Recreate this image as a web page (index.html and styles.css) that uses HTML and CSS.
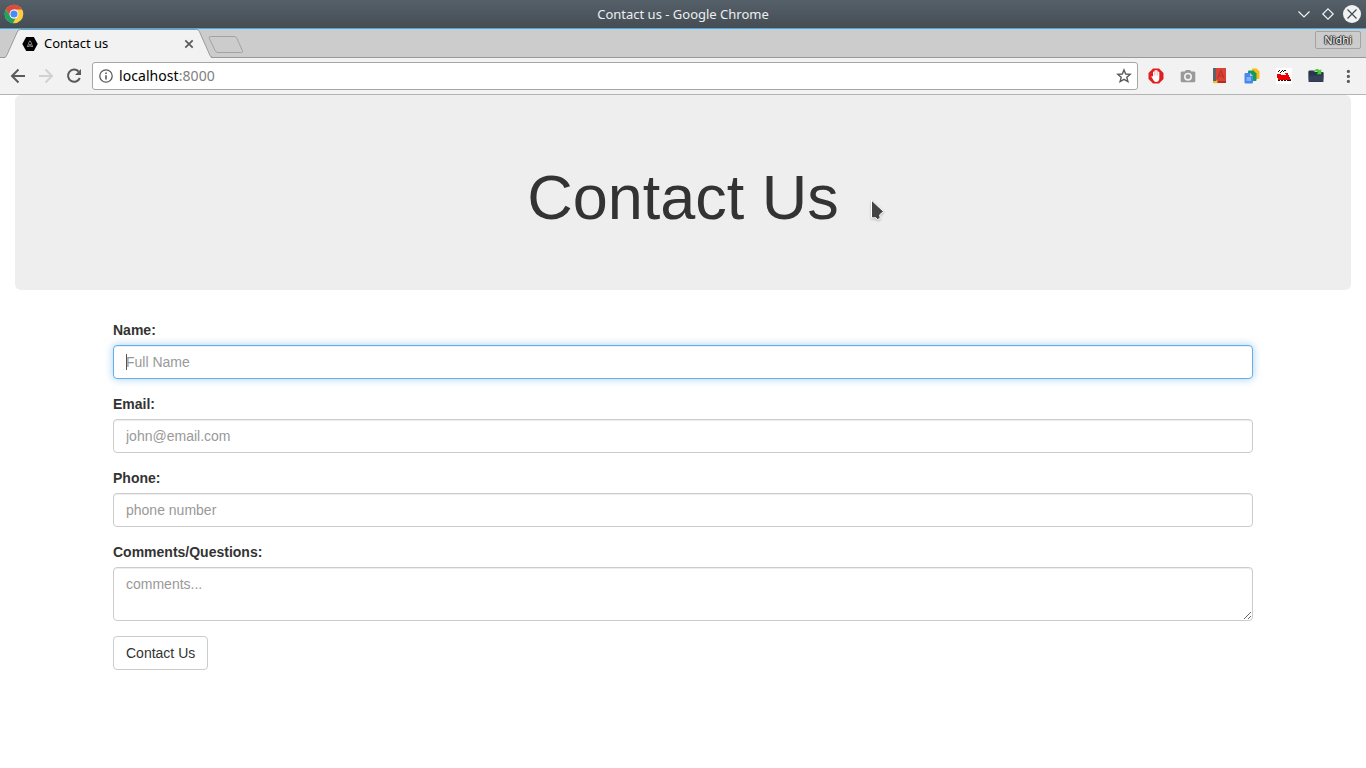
FILE: index.html
```html
<!DOCTYPE html>
<html lang="en">
<head>
<meta charset="utf-8">
<title>Contact us</title>
<link rel="stylesheet" href="styles.css">
</head>
<body>
<header class="titlebar">
  <svg class="chrome-logo" width="20" height="20" viewBox="0 0 20 20">
    <circle cx="10" cy="10" r="9.3" fill="#fbcd45"/>
    <path d="M10 10L5.9 12.3L1.9 5.4A9.3 9.3 0 0 1 18.1 5.4L10 5.5Z" fill="#dd4b3e"/>
    <path d="M1.9 5.4L6.1 12.3A4.5 4.5 0 0 0 11.5 14.2L9 19.25A9.3 9.3 0 0 1 1.9 5.4Z" fill="#1da462"/>
    <circle cx="10" cy="10" r="4.5" fill="#fff"/><circle cx="10" cy="10" r="3.6" fill="#4a8af4"/>
  </svg>
  <span class="window-title">Contact us - Google Chrome</span>
  <svg class="window-controls" width="70" height="28" viewBox="0 0 70 28" fill="none" stroke="#f1f2f2" stroke-width="1.2">
    <path d="M2.500 11.500L8 17L13.500 11.500"/>
    <path d="M32 8.800L37.200 14L32 19.200L26.800 14Z"/>
    <circle cx="56" cy="14" r="9" fill="#f1f2f2" stroke="none"/>
    <path d="M51.500 9.500L60.500 18.500M60.500 9.500L51.500 18.500" stroke="#414a51"/>
  </svg>
</header>
<nav class="tabstrip">
  <div class="tab">
    <svg class="tab-shape" width="250" height="29" viewBox="0 0 250 29">
      <path d="M5 29L17.200 3Q18.200 .5 20.500 .5H196.500Q198.500 .5 199.400 2.500L211 28.500V29Z" fill="#f2f2f2"/>
      <path d="M0 28.500H4Q6 28.500 6.900 26L17.200 3Q18.200 .5 20.500 .5H196.500Q198.500 .5 199.400 2.500L210 26.500Q211 28.500 213 28.500H250" fill="none" stroke="#999"/>
      <path d="M210.500 7.500H234Q236 7.500 236.800 9.200L242.400 21.500Q243.200 23.500 241.500 23.500H218Q216 23.500 215.200 21.700L209.300 9.500Q208.600 7.500 210.500 7.500Z" fill="#ccc" stroke="#a2a2a2"/>
    </svg>
    <svg class="favicon" width="16" height="16" viewBox="0 0 16 16"><path d="M4.200 1H11.800L15.700 8L11.800 15H4.200L.3 8Z" fill="#000"/><path d="M5.300 11L7.500 5H8.500L10.700 11M6 10.500H7.300V8.500H8.700V10.500H10" fill="none" stroke="#bbb" stroke-width=".7"/></svg>
    <span class="tab-title">Contact us</span>
    <svg class="tab-close" width="10" height="10" viewBox="0 0 10 10"><path d="M1.300 1.300L8.700 8.700M8.700 1.300L1.300 8.700" stroke="#5a5a5a" stroke-width="1.700"/></svg>
  </div>
  <span class="profile">Nidhi</span>
</nav>
<div class="toolbar">
  <svg class="nav-icons" width="92" height="36" viewBox="0 0 92 36" fill="none" stroke-width="2">
    <path d="M25 18H12M18.500 11.500L12 18L18.500 24.500" stroke="#5a5a5a"/>
    <path d="M39 18H52M45.500 11.500L52 18L45.500 24.500" stroke="#d1d1d1"/>
    <path d="M78.600 13.500A6.100 6.100 0 1 0 79.800 20" stroke="#5a5a5a"/><path d="M81 11V17H75Z" fill="#5a5a5a"/>
  </svg>
  <div class="address">
    <svg width="14" height="14" viewBox="0 0 14 14"><circle cx="7" cy="7" r="6.200" fill="none" stroke="#5a5a5a" stroke-width="1.300"/><path d="M7 6.300V10.500M7 3.500V5" stroke="#5a5a5a" stroke-width="1.600"/></svg>
    <span class="url">localhost<span class="port">:8000</span></span>
    <svg class="star" width="16" height="16" viewBox="0 0 16 16"><path d="M8 1.900L9.700 6L14.200 6.400L10.800 9.300L11.900 13.600L8 11.300L4.100 13.600L5.200 9.300L1.800 6.400L6.300 6Z" fill="none" stroke="#5a5a5a" stroke-width="1.400"/></svg>
  </div>
  <div class="extensions">
    <svg width="16" height="16" viewBox="0 0 16 16"><path d="M5 .5H11L15.500 5V11L11 15.500H5L.5 11V5Z" fill="#e02020"/><path d="M3.300 8.500Q4 7.600 5 8.800V4Q5.700 3 6.400 4V2.600Q7.200 1.700 8 2.600V2.400Q8.900 1.600 9.600 2.700V3.700Q10.600 3 11.300 4.200V10.500Q11 14 8 14Q6.300 13.800 5.300 12Z" fill="#fff"/><path d="M6.400 4V7.500M8 3V7.500M9.600 3.500V7.500" stroke="#e88" stroke-width=".5"/></svg>
    <svg width="16" height="16" viewBox="0 0 16 16"><path d="M2 3.500H4.700L6 2H10L11.300 3.500H14Q15.300 3.500 15.300 4.800V13Q15.300 14.300 14 14.300H2Q.7 14.300 .7 13V4.800Q.7 3.500 2 3.500Z" fill="#999"/><circle cx="8" cy="8.700" r="3.200" fill="#999" stroke="#f2f2f2" stroke-width="1.600"/></svg>
    <svg width="16" height="16" viewBox="0 0 16 16"><path d="M1 0H14V13H1Z" fill="#da4437"/><path d="M1 0H4V14H1Z" fill="#5a6468"/><path d="M4 13H14V15H4Z" fill="#b42c27"/><path d="M5.500 10.500L8.800 2.500L12.200 10.500M6.800 8H11" fill="none" stroke="#b5332b" stroke-width="1.100"/><path d="M1 13H4V12.500H5.500V15.800L4 14.800L2 15.800V15H1Z" fill="#ecc32f"/></svg>
    <svg width="16" height="16" viewBox="0 0 16 16"><path d="M8 .5H12.500L15.500 3.500V10Q15.500 11 14.500 11H8Z" fill="#fbbc19"/><path d="M5 2.500H9.500L12.500 5.500V12Q12.500 13 11.500 13H4V3.500Q4 2.500 5 2.500Z" fill="#159b59"/><path d="M1.500 5H6L9 8V14.500Q9 15.500 8 15.500H1.500Q.5 15.500 .5 14.500V6Q.5 5 1.500 5Z" fill="#4688ef"/><path d="M6 5L9 8H6Z" fill="#a9c9fb"/><path d="M2.500 10H7M2.500 12H7" stroke="#c0d8ff"/></svg>
    <svg width="16" height="16" viewBox="0 0 16 16" shape-rendering="crispEdges"><path fill="#fff" d="M0 0H16V16H0Z"/><path d="M2 4H3V3H2ZM3 3H4V2H3ZM5 4H6V3H5ZM6 3H7V2H6ZM8 3H10V2H8ZM4 5H5V4H4ZM7 4H8V3H7Z" fill="#111"/><path d="M1 6H5V7H10V6H9V5H12V7H13V9H14V11H15V12H2V10H1Z" fill="#ef0000"/><path d="M2 12H4V13H2ZM5 12H7V13H5ZM8 12H10V13H8ZM11 12H15V13H11Z" fill="#111"/></svg>
    <svg width="16" height="16" viewBox="0 0 16 16"><path d="M1.500 2.500H6L7 4H14.500Q15.700 4 15.700 5.200L15.300 14H.7L.3 4Q.3 2.500 1.500 2.500Z" fill="#29354a"/><path d="M.6 7.500H15.400L15.100 13.500H.9Z" fill="#354159"/><path d="M5.200 3.500Q8 -.8 12 2.200L13.300 1.200V6.200H8.500L10.200 4.500Q8 2.700 5.200 3.500Z" fill="#48cc36"/></svg>
    <svg width="16" height="16" viewBox="0 0 16 16" fill="#5a5a5a"><circle cx="8.400" cy="3.400" r="1.600"/><circle cx="8.400" cy="8.400" r="1.600"/><circle cx="8.400" cy="13.400" r="1.600"/></svg>
  </div>
</div>
<main class="page">
  <div class="jumbotron"><h1>Contact Us</h1></div>
  <form class="container">
    <div class="form-group"><label for="name">Name:</label><div class="field-wrap"><input class="form-control focused" id="name" placeholder="Full Name"><span class="caret"></span></div></div>
    <div class="form-group"><label for="email">Email:</label><input class="form-control" id="email" placeholder="john@email.com"></div>
    <div class="form-group"><label for="phone">Phone:</label><input class="form-control" id="phone" placeholder="phone number"></div>
    <div class="form-group"><label for="comments">Comments/Questions:</label><textarea class="form-control" id="comments" rows="2" placeholder="comments..."></textarea></div>
    <button class="btn" type="button">Contact Us</button>
  </form>
</main>
<svg class="pointer" width="22" height="26" viewBox="0 0 22 26"><path d="M4.500 3.200V20.800H8.900L10.300 22.500L13.200 21.500L12.700 17.800L16.500 14.500Z" fill="#444" stroke="#fff" stroke-width="1"/></svg>
</body>
</html>
```
FILE: styles.css
```css
* { box-sizing: border-box; }
body {
  margin: 0;
  height: 768px;
  overflow: hidden;
  background: #fff;
  color: #333;
  font: 14px/20px "Liberation Sans", Arial, sans-serif;
}
svg { display: block; flex: none; }

.titlebar {
  height: 29px;
  display: flex;
  align-items: flex-start;
  justify-content: space-between;
  background: linear-gradient(#566069, #444d54);
  border-bottom: 1px solid #3daee9;
}
.chrome-logo { margin: 4px 46px 0 4px; }
.window-title {
  font: 13px/28px "Noto Sans", sans-serif;
  color: #eceeef;
}
.tabstrip {
  height: 29px;
  display: flex;
  justify-content: space-between;
  background: #ccc;
  box-shadow: inset 0 -1px #999;
}
.tab {
  position: relative;
  width: 250px;
  display: flex;
  align-items: center;
  padding-left: 22px;
  color: #000;
}
.tab-shape { position: absolute; left: 0; top: 0; }
.favicon, .tab-title, .tab-close { position: relative; }
.tab-title {
  width: 140px;
  margin: 0 0 2px 6px;
  font: 13px/26px "Noto Sans", sans-serif;
  letter-spacing: -.05px;
}
.tab-close { margin-top: 1px; }
.profile {
  width: 46px;
  height: 18px;
  margin: 2px 5px 0 0;
  border: 1px solid #a3a3a3;
  border-radius: 2px;
  text-align: center;
  font: 11px/16px "Noto Sans", sans-serif;
  color: #fff;
  text-shadow: 1px 0 1px #222, -1px 0 1px #222, 0 1px 1px #222, 0 -1px 1px #222;
}
.toolbar {
  height: 37px;
  display: flex;
  background: #f2f2f2;
  border-bottom: 1px solid #b4b4b4;
}
.address {
  width: 1046px;
  height: 28px;
  margin-top: 4px;
  padding: 0 5px 0 6px;
  display: flex;
  align-items: center;
  background: #fff;
  border: 1px solid #a6a6a6;
  border-radius: 3px;
}
.url {
  margin-left: 6px;
  font: 14px/26px "Noto Sans", sans-serif;
  letter-spacing: .06px;
  color: #000;
}
.port { color: #808080; }
.star { margin-left: auto; }
.extensions {
  display: flex;
  gap: 16px;
  margin: 10px 0 0 10px;
}

.page { padding: 0 15px; }
.jumbotron {
  height: 195px;
  margin-bottom: 30px;
  padding-top: 68px;
  background: #eee;
  border-radius: 6px;
  text-align: center;
}
h1 {
  margin: 0;
  font-size: 63px;
  line-height: 69px;
  font-weight: 500;
}
.container { width: 1140px; margin: 0 auto; }
.form-group { margin-bottom: 15px; }
label { display: block; margin-bottom: 5px; font-weight: 700; }
.field-wrap { position: relative; }
.form-control {
  display: block;
  width: 100%;
  height: 34px;
  padding: 6px 12px;
  border: 1px solid #ccc;
  border-radius: 4px;
  background: #fff;
  box-shadow: inset 0 1px 1px rgba(0, 0, 0, .075);
  color: #555;
  font: inherit;
  outline: none;
}
.form-control::placeholder { color: #999; opacity: 1; }
textarea.form-control { height: 54px; resize: vertical; }
.focused {
  border-color: #66afe9;
  box-shadow: inset 0 1px 1px rgba(0, 0, 0, .075), 0 0 8px rgba(102, 175, 233, .6);
}
.caret {
  position: absolute;
  left: 13px;
  top: 9px;
  width: 1px;
  height: 16px;
  background: #555;
}
.btn {
  display: block;
  height: 34px;
  padding: 6px 12px;
  border: 1px solid #ccc;
  border-radius: 4px;
  background: #fff;
  color: #333;
  font: inherit;
}
.pointer {
  position: absolute;
  left: 867px;
  top: 197px;
  filter: drop-shadow(0 1px 1px rgba(0, 0, 0, .25));
}
```
